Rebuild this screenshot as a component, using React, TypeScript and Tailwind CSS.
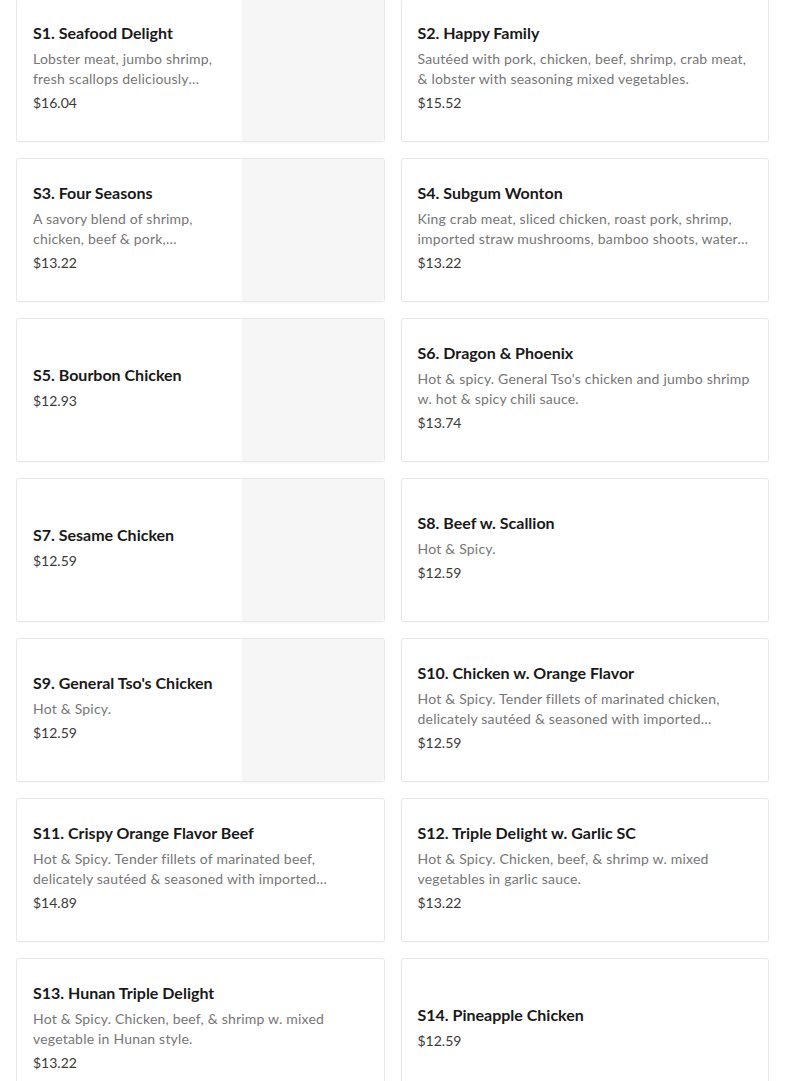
type Item = {
  name: string
  desc?: string
  price: string
  image?: boolean
}

const items: Item[] = [
  { name: 'S1. Seafood Delight', desc: 'Lobster meat, jumbo shrimp, fresh scallops deliciously sautéed with mixed vegetables in white sauce.', price: '$16.04', image: true },
  { name: 'S2. Happy Family', desc: 'Sautéed with pork, chicken, beef, shrimp, crab meat, & lobster with seasoning mixed vegetables.', price: '$15.52' },
  { name: 'S3. Four Seasons', desc: 'A savory blend of shrimp, chicken, beef & pork, deliciously sautéed with mixed vegetables.', price: '$13.22', image: true },
  { name: 'S4. Subgum Wonton', desc: 'King crab meat, sliced chicken, roast pork, shrimp, imported straw mushrooms, bamboo shoots, water chestnuts & crispy wonton.', price: '$13.22' },
  { name: 'S5. Bourbon Chicken', price: '$12.93', image: true },
  { name: 'S6. Dragon & Phoenix', desc: "Hot & spicy. General Tso's chicken and jumbo shrimp w. hot & spicy chili sauce.", price: '$13.74' },
  { name: 'S7. Sesame Chicken', price: '$12.59', image: true },
  { name: 'S8. Beef w. Scallion', desc: 'Hot & Spicy.', price: '$12.59' },
  { name: "S9. General Tso's Chicken", desc: 'Hot & Spicy.', price: '$12.59', image: true },
  { name: 'S10. Chicken w. Orange Flavor', desc: 'Hot & Spicy. Tender fillets of marinated chicken, delicately sautéed & seasoned with imported mandarin orange peel.', price: '$12.59' },
  { name: 'S11. Crispy Orange Flavor Beef', desc: 'Hot & Spicy. Tender fillets of marinated beef, delicately sautéed & seasoned with imported mandarin orange peel.', price: '$14.89' },
  { name: 'S12. Triple Delight w. Garlic SC', desc: 'Hot & Spicy. Chicken, beef, & shrimp w. mixed vegetables in garlic sauce.', price: '$13.22' },
  { name: 'S13. Hunan Triple Delight', desc: 'Hot & Spicy. Chicken, beef, & shrimp w. mixed vegetable in Hunan style.', price: '$13.22' },
  { name: 'S14. Pineapple Chicken', price: '$12.59' },
]

function MenuCard({ item }: { item: Item }) {
  return (
    <div className="flex h-[144px] overflow-hidden rounded-[3px] border border-[#e8e8e8] bg-white shadow-[0_1px_2px_rgba(0,0,0,0.04)]">
      <div className="flex min-w-0 flex-1 flex-col justify-center gap-1 px-4 pb-1.5">
        <div className="text-[16px] font-bold leading-6 text-[#191919]">{item.name}</div>
        {item.desc && (
          <div className="line-clamp-2 text-[14px] leading-5 tracking-[0.2px] text-[#767676]">{item.desc}</div>
        )}
        <div className="text-[14px] leading-5 text-[#3a3a3a]">{item.price}</div>
      </div>
      {item.image && <div className="w-[142px] shrink-0 bg-[#f6f6f6]" />}
    </div>
  )
}

export default function App() {
  return (
    <div className="min-h-screen bg-white font-['Lato','Liberation_Sans',sans-serif]">
      <div className="-mt-[2px] grid grid-cols-2 gap-4 px-4">
        {items.map((item) => (
          <MenuCard key={item.name} item={item} />
        ))}
      </div>
    </div>
  )
}
